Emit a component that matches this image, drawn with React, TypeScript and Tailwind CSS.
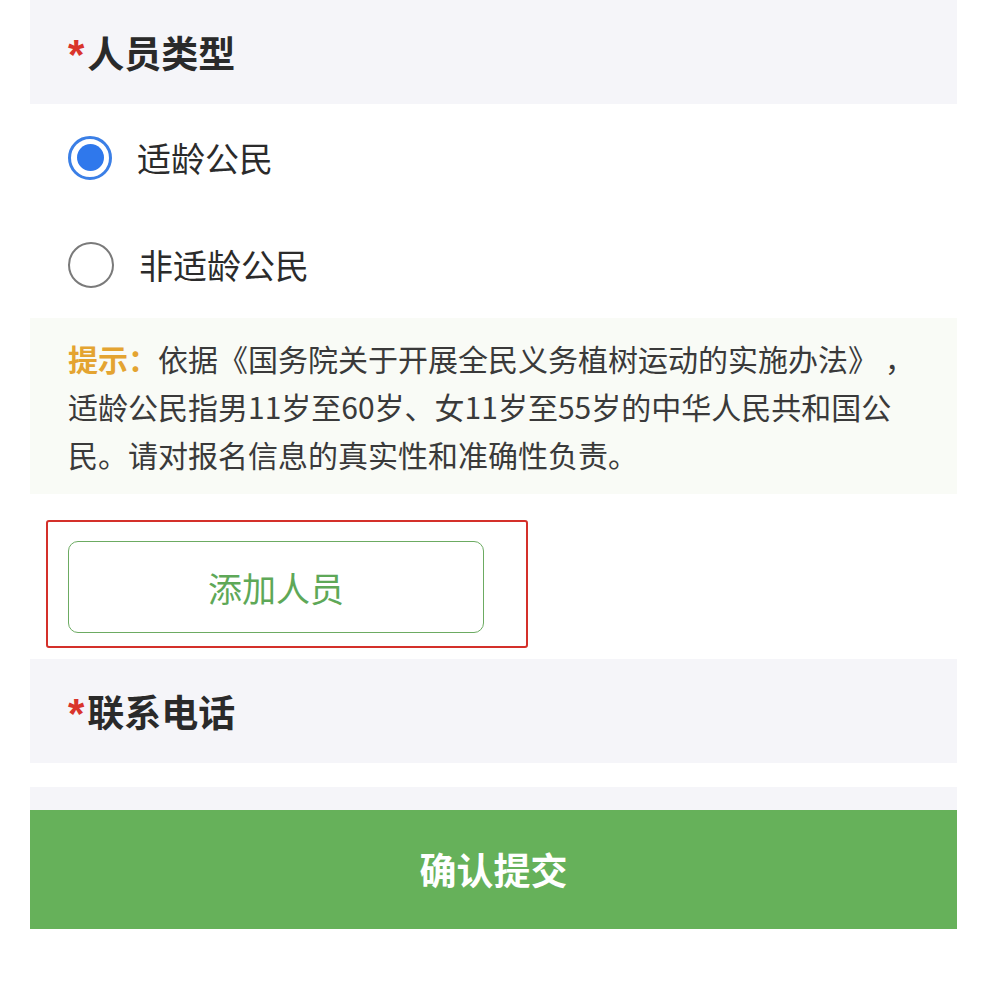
import { useState } from "react";

const cjk = "font-['Noto_Sans_CJK_SC','Noto_Sans',sans-serif]";

function Radio({ checked, label, onClick }: { checked: boolean; label: string; onClick: () => void }) {
  return (
    <div className="flex h-[107px] items-center pl-[38px]" onClick={onClick}>
      {checked ? (
        <span className="flex h-[44px] w-[44px] items-center justify-center rounded-full border-[3px] border-[#3b7fe6] bg-white">
          <span className="h-[27px] w-[27px] rounded-full bg-[#2f78ec]" />
        </span>
      ) : (
        <span className="h-[46px] w-[46px] rounded-full border-2 border-[#7a7a7a] bg-white" />
      )}
      <span className="ml-[25px] text-[34px] leading-none text-[#2b2b2b]">{label}</span>
    </div>
  );
}

function SectionTitle({ title }: { title: string }) {
  return (
    <div className="flex h-[104px] items-center bg-[#f5f5f9] pl-[38px]">
      <span className="mr-[3px] self-start pt-[34px] text-[42px] font-bold leading-none text-[#d9342c] font-['Liberation_Sans',sans-serif]">*</span>
      <span className="text-[37px] font-bold leading-none text-[#2a2a2a]">{title}</span>
    </div>
  );
}

export default function App() {
  const [type, setType] = useState(0);

  return (
    <div className={`h-[994px] w-[993px] bg-white ${cjk}`}>
      <div className="ml-[30px] w-[927px]">
        <SectionTitle title="人员类型" />

        <Radio checked={type === 0} label="适龄公民" onClick={() => setType(0)} />
        <Radio checked={type === 1} label="非适龄公民" onClick={() => setType(1)} />

        <div className="bg-[#f9fbf6] px-[38px] py-4 text-[30px] leading-[48px] text-[#3a3a3a]">
          <span className="font-bold text-[#e4a431]">提示：</span>
          依据《国务院关于开展全民义务植树运动的实施办法》 ，
          <br />
          适龄公民指男11岁至60岁、女11岁至55岁的中华人民共和国公
          <br />
          民。请对报名信息的真实性和准确性负责。
        </div>

        <div className="ml-[16px] mt-[26px] h-[128px] w-[482px] rounded-[3px] border-2 border-[#d4302a] pl-[20px] pt-[19px]">
          <button className="flex h-[92px] w-[416px] items-center justify-center rounded-[10px] border-[1.5px] border-[#6cab62] bg-white text-[34px] text-[#5ea858]">
            添加人员
          </button>
        </div>

        <div className="mt-[11px]">
          <SectionTitle title="联系电话" />
        </div>

        <div className="mt-[24px] h-[23px] bg-[#f5f5f9]" />
        <button className="flex h-[119px] w-full items-center justify-center bg-[#66b15a] text-[37px] font-bold text-white">
          确认提交
        </button>
      </div>
    </div>
  );
}
